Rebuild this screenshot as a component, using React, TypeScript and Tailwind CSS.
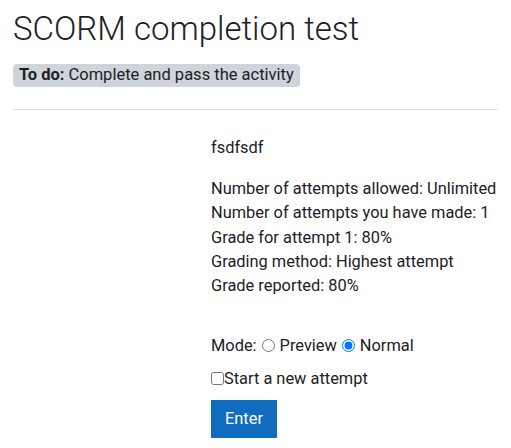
export default function App() {
  return (
    <div className="bg-white min-h-screen px-[13px] pt-[9px] text-[#1d2125] font-['Roboto',sans-serif]">
      <h2 className="text-[33px] leading-[1.2] font-light">SCORM completion test</h2>
      <div className="mt-[15px] inline-flex items-center rounded-[4px] bg-[#ced4da] px-[6px] h-[23px] text-[16.5px]">
        <strong className="font-bold mr-1">To do:</strong>Complete and pass the activity
      </div>
      <hr className="mt-[22px] border-t border-[#dee2e6]" />
      <div className="ml-[198px] mt-[26px] text-[16.4px] leading-[24.3px]">
        <p>fsdfsdf</p>
        <div className="mt-[17px]">
          <div>Number of attempts allowed: Unlimited</div>
          <div>Number of attempts you have made: 1</div>
          <div>Grade for attempt 1: 80%</div>
          <div>Grading method: Highest attempt</div>
          <div>Grade reported: 80%</div>
        </div>
        <form className="mt-[35px]">
          <div className="flex items-center">
            Mode:
            <input type="radio" name="mode" className="ml-[5px] mr-[5px]" />
            Preview
            <input type="radio" name="mode" defaultChecked className="ml-[5px] mr-[5px]" />
            Normal
          </div>
          <label className="mt-[9px] flex items-center">
            <input type="checkbox" className="m-0 w-[13px] h-[13px]" />
            Start a new attempt
          </label>
          <button type="button" className="mt-[9px] h-[38px] px-[14px] bg-[#0f6cbf] text-white text-[16.4px]">
            Enter
          </button>
        </form>
      </div>
    </div>
  )
}
